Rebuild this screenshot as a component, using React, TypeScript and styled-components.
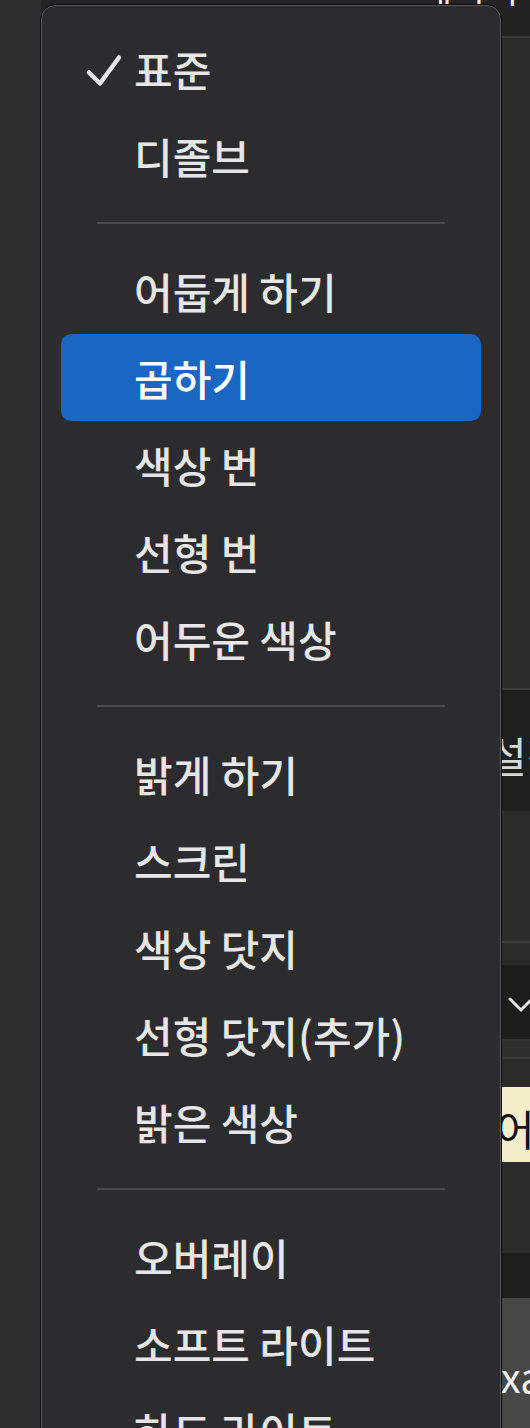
import React from "react";
import styled, { createGlobalStyle } from "styled-components";

const GlobalStyle = createGlobalStyle`
  html, body { margin: 0; padding: 0; background: #2d2d2d; }
  body { overflow: hidden; font-family: "Noto Sans CJK KR", "Noto Sans", sans-serif; }
`;

const Page = styled.div`
  position: relative;
  width: 530px;
  height: 1428px;
  overflow: hidden;
  display: flex;
`;

const LeftPanel = styled.div`
  width: 41px;
  flex: none;
  background: #2e2e2e;
`;

const Workspace = styled.div`
  flex: 1;
  display: flex;
  flex-direction: column;
`;

const Band = styled.div<{ $h: number; $bg: string; $line?: string }>`
  flex: none;
  height: ${(p) => p.$h}px;
  background: ${(p) => p.$bg};
  border-bottom: ${(p) => (p.$line ? `2px solid ${p.$line}` : "none")};
  display: flex;
  align-items: center;
  overflow: hidden;
  position: relative;
`;

const HeaderTitle = styled.span`
  margin-left: 378px;
  margin-top: -62px;
  font-size: 36px;
  color: #f0f0f0;
  white-space: nowrap;
`;

const BandLabel = styled.span<{ $color: string; $left: number; $size?: number; $dy?: number }>`
  margin-left: ${(p) => p.$left}px;
  margin-top: ${(p) => (p.$dy ?? 0) * 2}px;
  font-size: ${(p) => p.$size ?? 42}px;
  color: ${(p) => p.$color};
  white-space: nowrap;
  font-family: "Noto Sans CJK KR", "Liberation Sans", sans-serif;
`;

const Chevron = styled.svg`
  margin-left: 467px;
  margin-top: 6px;
  width: 26px;
  height: 16px;
`;

const Menu = styled.div`
  position: absolute;
  left: 41px;
  top: 5px;
  width: 460px;
  box-sizing: border-box;
  padding: 19px 19px 40px;
  background: #2c2c2e;
  border: 1.5px solid #5a5a5c;
  outline: 1px solid #0c0c0c;
  border-radius: 14px;
  display: flex;
  flex-direction: column;
`;

const Item = styled.div<{ $active?: boolean }>`
  height: 87px;
  flex: none;
  display: flex;
  align-items: center;
  padding-left: 26px;
  border-radius: 10px;
  background: ${(p) => (p.$active ? "#1867c2" : "transparent")};
  color: ${(p) => (p.$active ? "#ffffff" : "#e6e6e6")};
  font-size: 42px;
  font-weight: 500;
  line-height: 1;
  white-space: nowrap;
`;

const CheckSlot = styled.div`
  width: 47px;
  height: 34px;
  flex: none;
  display: flex;
  align-items: center;
`;

const Separator = styled.div`
  height: 48px;
  flex: none;
  display: flex;
  align-items: center;
  padding: 0 36px;
  &::after {
    content: "";
    flex: 1;
    height: 2px;
    background: #4a4a4c;
  }
`;

type Entry = { label?: string; sep?: boolean; checked?: boolean; active?: boolean };

const entries: Entry[] = [
  { label: "표준", checked: true },
  { label: "디졸브" },
  { sep: true },
  { label: "어둡게 하기" },
  { label: "곱하기", active: true },
  { label: "색상 번" },
  { label: "선형 번" },
  { label: "어두운 색상" },
  { sep: true },
  { label: "밝게 하기" },
  { label: "스크린" },
  { label: "색상 닷지" },
  { label: "선형 닷지(추가)" },
  { label: "밝은 색상" },
  { sep: true },
  { label: "오버레이" },
  { label: "소프트 라이트" },
  { label: "하드 라이트" },
];

const Check = () => (
  <svg width="34" height="34" viewBox="0 0 34 34" style={{ overflow: "visible" }}>
    <path
      d="M2 20.5 L13 31.5 L32 5.5"
      fill="none"
      stroke="#e6e6e6"
      strokeWidth="4.5"
      strokeLinecap="round"
      strokeLinejoin="round"
    />
  </svg>
);

export default function App() {
  return (
    <>
      <GlobalStyle />
      <Page>
        <LeftPanel />
        <Workspace>
          <Band $h={36} $bg="#232323" $line="#3c3c3c">
            <HeaderTitle>레이어</HeaderTitle>
          </Band>
          <Band $h={650} $bg="#2b2b2b" $line="#3a3a3a" />
          <Band $h={121} $bg="#1f1f1f">
            <BandLabel $color="#d8d8d8" $left={447} $dy={4}>
              설정
            </BandLabel>
          </Band>
          <Band $h={130} $bg="#2c2c2c" $line="#3b3b3b" />
          <Band $h={22} $bg="#2a2a2a" />
          <Band $h={74} $bg="#1d1d1d" $line="#333333">
            <Chevron viewBox="0 0 26 16">
              <path d="M2 2 L13 13 L24 2" fill="none" stroke="#e8e8e8" strokeWidth="3" strokeLinecap="round" strokeLinejoin="round" />
            </Chevron>
          </Band>
          <Band $h={16} $bg="#2e2e2e" $line="#3a3a3a" />
          <Band $h={28} $bg="#2a2a2a" />
          <Band $h={75} $bg="#f2efc9">
            <BandLabel $color="#111111" $left={455} $dy={3}>
              어두운
            </BandLabel>
          </Band>
          <Band $h={91} $bg="#2b2b2b" />
          <Band $h={45} $bg="#1e1e1e" />
          <Band $h={133} $bg="#474747">
            <BandLabel $color="#f2f2f2" $left={438} $size={40} $dy={11}>
              exa
            </BandLabel>
          </Band>
        </Workspace>
        <Menu>
          {entries.map((e, i) =>
            e.sep ? (
              <Separator key={i} />
            ) : (
              <Item key={i} $active={e.active}>
                <CheckSlot>{e.checked && <Check />}</CheckSlot>
                {e.label}
              </Item>
            )
          )}
        </Menu>
      </Page>
    </>
  );
}
